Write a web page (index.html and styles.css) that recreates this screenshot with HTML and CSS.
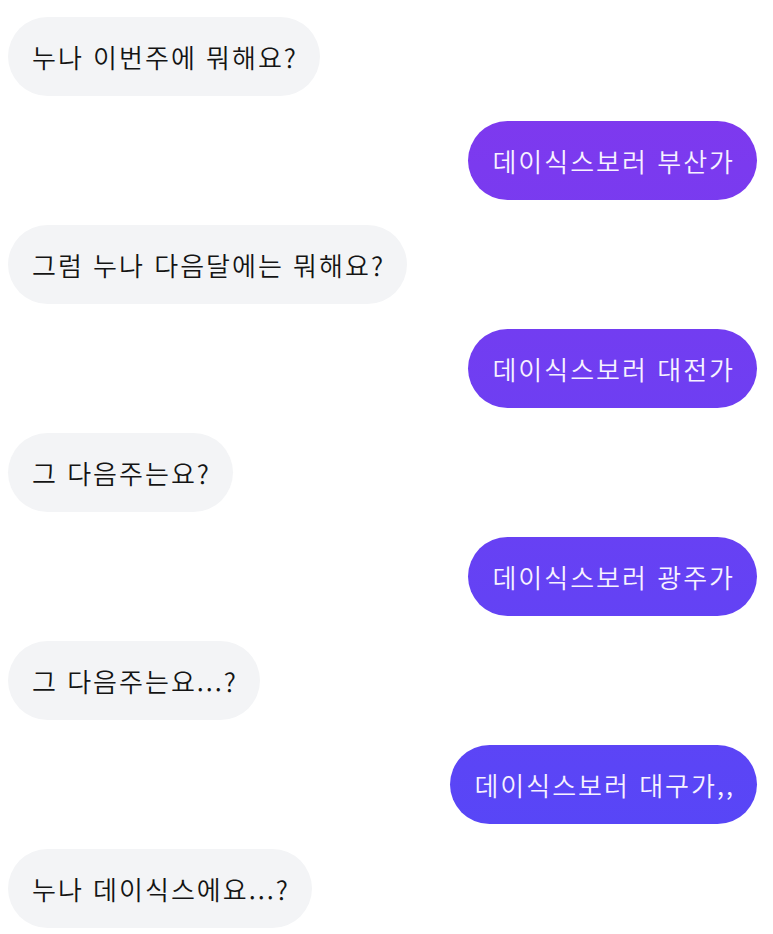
FILE: index.html
```html
<!DOCTYPE html>
<html lang="ko">
<head>
  <meta charset="UTF-8">
  <meta name="viewport" content="width=device-width, initial-scale=1.0">
  <title>Chat</title>
  <link rel="stylesheet" href="styles.css">
</head>
<body>
  <div class="chat">
    <div class="msg them">누나 이번주에 뭐해요?</div>
    <div class="msg me">데이식스보러 부산가</div>
    <div class="msg them">그럼 누나 다음달에는 뭐해요?</div>
    <div class="msg me">데이식스보러 대전가</div>
    <div class="msg them">그 다음주는요?</div>
    <div class="msg me">데이식스보러 광주가</div>
    <div class="msg them">그 다음주는요...?</div>
    <div class="msg me">데이식스보러 대구가,,</div>
    <div class="msg them">누나 데이식스에요...?</div>
  </div>
</body>
</html>
```

FILE: styles.css
```css
body {
  margin: 0;
  background-color: #fff;
  font-family: "Noto Sans CJK KR", "Noto Sans", sans-serif;
}
.chat {
  display: flex;
  flex-direction: column;
  gap: 25px;
  padding: 17px 16px 0 8px;
}
.msg {
  font-size: 26px;
  font-weight: 350;
  letter-spacing: 2px;
  line-height: 39px;
  padding: 20px 22px 20px 24px;
  border-radius: 40px;
  max-width: 80%;
}
.them {
  align-self: flex-start;
  background-color: #f3f4f6;
  color: #141414;
}
.me {
  align-self: flex-end;
  color: #f7f2ff;
  background: linear-gradient(180deg, #8437ed 0%, #5248f8 100%);
  background-attachment: fixed;
}
```
